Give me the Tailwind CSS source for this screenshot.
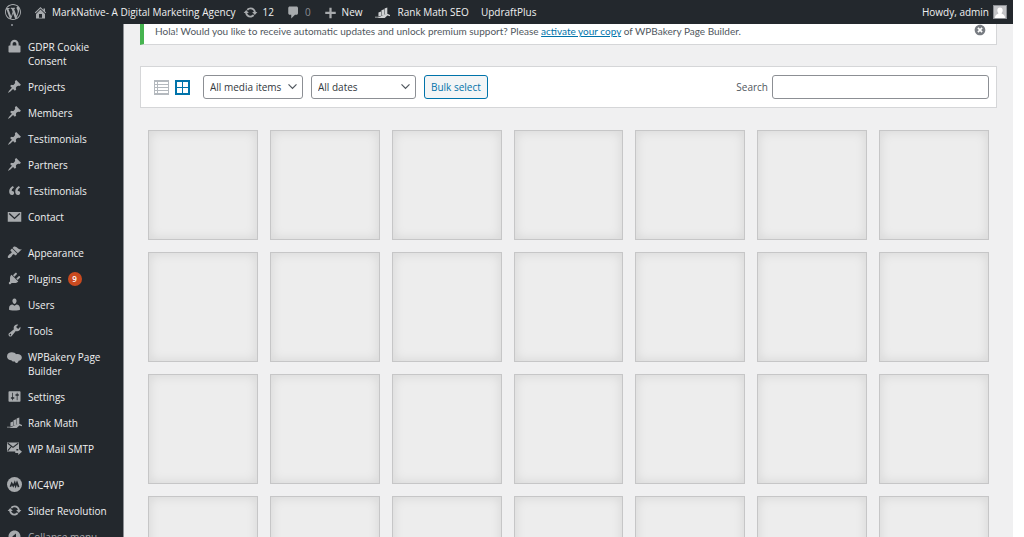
<!DOCTYPE html>
<html lang="en">
<head>
  <meta charset="UTF-8" />
  <meta name="viewport" content="width=device-width, initial-scale=1.0"/>
  <title>Media Library - MarkNative</title>
  <script src="https://cdn.jsdelivr.net/npm/@tailwindcss/browser@4"></script>
</head>
<body class="flex h-screen flex-col overflow-hidden bg-white pr-[11px] font-['Open_Sans','Noto_Sans',sans-serif] text-[10px] leading-[14px]">

  <!-- icons used more than once -->
  <svg class="hidden">
    <symbol id="i-pin" viewBox="0 0 20 20"><path d="M10.44 3.02l1.82-1.82 6.36 6.35-1.83 1.82c-1.05-.68-2.48-.57-3.41.36l-.75.75c-.92.93-1.04 2.35-.35 3.41l-1.83 1.82-2.41-2.41-2.8 2.79c-.42.42-3.38 2.71-3.8 2.29s1.86-3.39 2.28-3.81l2.79-2.79L4.1 9.36l1.83-1.82c1.05.69 2.48.57 3.4-.36l.75-.75c.93-.92 1.05-2.35.36-3.41z"/></symbol>
    <symbol id="i-update" viewBox="0 0 20 20"><path d="M10.2 3.28c3.53 0 6.43 2.61 6.92 6h2.08l-3.5 4-3.5-4h2.32c-.45-1.97-2.21-3.45-4.32-3.45-1.45 0-2.73.71-3.54 1.78L4.95 5.66C6.23 4.2 8.11 3.28 10.2 3.28zm-.4 13.44c-3.52 0-6.43-2.61-6.92-6H.8l3.5-4c1.17 1.33 2.33 2.67 3.5 4H5.48c.45 1.97 2.21 3.45 4.32 3.45 1.45 0 2.73-.71 3.54-1.78l1.71 1.95c-1.28 1.46-3.15 2.38-5.25 2.38z"/></symbol>
    <symbol id="i-rank" viewBox="0 0 20 20"><path d="M4.600 10l3.400-1.300v5.500l-3.400 1.300zM8.600 7l3.600-1.400v7.400l-3.600 1.600zM12.800 4.600l3.600-1.400v8.600l-3.600 1.400z"/><path d="M0 15.700h3.600l1.400.5 7.500-3.500 4-.9 3.500 1.500v1.700l-3.500-.9-3.600 3.100H4.800l-1.300-.6H0z"/></symbol>
    <symbol id="i-chevron" viewBox="0 0 20 20"><path d="M3.500 5.500L10 12l6.500-6.500L18 7l-8 8-8-8z"/></symbol>
  </svg>

  <header class="flex h-6 shrink-0 items-center bg-[#23282d] pr-[6px] pl-[5px] text-[#f0f0f1]">
    <a href="#" aria-label="About WordPress" class="mr-3">
      <svg class="size-4 fill-[#a7aaad]" viewBox="0 0 20 20"><path d="M20 10c0-5.51-4.49-10-10-10C4.48 0 0 4.49 0 10c0 5.52 4.48 10 10 10 5.51 0 10-4.48 10-10zM7.78 15.37L4.37 6.22c.55-.02 1.17-.08 1.17-.08.5-.06.44-1.13-.06-1.11 0 0-1.45.11-2.37.11-.18 0-.37 0-.58-.01C4.12 2.69 6.87 1.11 10 1.11c2.33 0 4.45.87 6.05 2.34-.68-.11-1.65.39-1.65 1.58 0 .74.45 1.36.9 2.1.35.61.55 1.36.55 2.46 0 1.49-1.4 5-1.4 5l-3.03-8.37c.54-.02.82-.17.82-.17.5-.05.44-1.25-.06-1.22 0 0-1.44.12-2.38.12-.87 0-2.33-.12-2.33-.12-.5-.03-.56 1.2-.06 1.22l.92.08 1.26 3.41zM17.41 10c.24-.64.74-1.87.43-4.25.7 1.29 1.05 2.71 1.05 4.25 0 3.29-1.73 6.24-4.4 7.78.97-2.59 1.94-5.2 2.92-7.78zM6.1 18.09C3.12 16.65 1.11 13.53 1.11 10c0-1.3.23-2.48.72-3.59C3.25 10.3 4.67 14.2 6.1 18.09zm4.03-6.63l2.58 6.98c-.86.29-1.76.45-2.71.45-.79 0-1.57-.11-2.29-.33.81-2.38 1.62-4.74 2.42-7.1z"/></svg>
    </a>
    <a href="#" class="mr-2 flex items-center gap-1">
      <svg class="size-[15px] fill-[#a7aaad]" viewBox="0 0 20 20"><path d="M16 8.5l1.53 1.53-1.06 1.06L10 4.6l-6.47 6.49-1.06-1.06L10 2.5l4 4v-2h2v4zm-6-2.46l6 5.99V18H4v-5.97zM12 17v-5H8v5h4z"/></svg>
      <span>MarkNative- A Digital Marketing Agency</span>
    </a>
    <a href="#" class="mr-3 flex items-center gap-1">
      <svg class="size-[15px] fill-[#a7aaad]"><use href="#i-update"/></svg>
      <span>12</span>
    </a>
    <a href="#" class="mr-3 flex items-center gap-1">
      <svg class="size-[15px] fill-[#a7aaad]" viewBox="0 0 20 20"><path d="M5 2h9c1.1 0 2 .9 2 2v7c0 1.1-.9 2-2 2h-2l-5 5v-5H5c-1.1 0-2-.9-2-2V4c0-1.1.9-2 2-2z"/></svg>
      <span class="text-[#8c8f94]">0</span>
    </a>
    <a href="#" class="mr-3 flex items-center gap-1">
      <svg class="size-[15px] fill-[#a7aaad]" viewBox="0 0 20 20"><path d="M17 9v3h-5.500v5.500h-3V12H3V9h5.500V3.500h3V9z"/></svg>
      <span>New</span>
    </a>
    <a href="#" class="mr-3 flex items-center gap-2">
      <svg class="size-[15px] fill-[#d0d2d4]"><use href="#i-rank"/></svg>
      <span>Rank Math SEO</span>
    </a>
    <a href="#">UpdraftPlus</a>
    <a href="#" class="ml-auto flex items-center gap-1">
      <span>Howdy, admin</span>
      <svg class="size-[14px]" viewBox="0 0 14 14"><path fill="#8c8f94" d="M0 0h14v14H0z"/><path fill="#c3c4c7" d="M1 1h12v12H1z"/><path fill="#fff" d="M7 2.500c1.700 0 2.700 1.200 2.700 2.800 0 1-.4 2-1 2.600v.8c1.700.3 3.300 1.300 3.300 4.300H2c0-3 1.600-4 3.300-4.300v-.8c-.6-.6-1-1.600-1-2.600C4.300 3.700 5.300 2.500 7 2.500z"/></svg>
    </a>
  </header>

  <div class="flex min-h-0 flex-1">

    <aside class="w-[124px] shrink-0 overflow-hidden border-r border-[#8c8f94] bg-[#23282d] text-[#f0f0f1]">
      <div class="flex h-[10px] pl-[11px]"><span class="size-[2px] bg-[#787c82]"></span></div>
      <nav>
        <ul>
          <li><a href="#" class="flex gap-[6px] py-[6px] pl-[7px]">
            <svg class="-my-px size-[15px] shrink-0 fill-[#a7aaad]" viewBox="0 0 20 20"><path d="M15.500 8.500h1.500c.55 0 1 .45 1 1V17c0 .55-.45 1-1 1H3c-.55 0-1-.45-1-1V9.500c0-.55.45-1 1-1h1.500V6.500C4.500 3.500 7 1 10 1s5.500 2.500 5.500 5.500zm-3 0v-2c0-1.400-1.100-2.500-2.500-2.500S7.500 5.100 7.500 6.500v2z"/></svg>
            <span>GDPR Cookie<br>Consent</span></a></li>
          <li><a href="#" class="flex gap-[6px] py-[6px] pl-[7px]"><svg class="-my-px size-[15px] shrink-0 fill-[#a7aaad]"><use href="#i-pin"/></svg><span>Projects</span></a></li>
          <li><a href="#" class="flex gap-[6px] py-[6px] pl-[7px]"><svg class="-my-px size-[15px] shrink-0 fill-[#a7aaad]"><use href="#i-pin"/></svg><span>Members</span></a></li>
          <li><a href="#" class="flex gap-[6px] py-[6px] pl-[7px]"><svg class="-my-px size-[15px] shrink-0 fill-[#a7aaad]"><use href="#i-pin"/></svg><span>Testimonials</span></a></li>
          <li><a href="#" class="flex gap-[6px] py-[6px] pl-[7px]"><svg class="-my-px size-[15px] shrink-0 fill-[#a7aaad]"><use href="#i-pin"/></svg><span>Partners</span></a></li>
          <li><a href="#" class="flex gap-[6px] py-[6px] pl-[7px]">
            <svg class="-my-px size-[15px] shrink-0 fill-[#a7aaad]" viewBox="0 0 20 20"><path d="M9.490 13.220c0-.74-.2-1.380-.61-1.900-.62-.78-1.830-.88-2.530-.72-.29-1.650 1.110-3.750 2.920-4.650L7.880 4c-2.730 1.300-5.420 4.280-4.960 8.050C3.210 14.430 4.590 16 6.540 16c.85 0 1.560-.25 2.120-.75s.83-1.180.83-2.030zm8.050 0c0-.74-.2-1.380-.61-1.900-.63-.78-1.830-.88-2.530-.72-.29-1.650 1.110-3.750 2.920-4.650L15.930 4c-2.730 1.300-5.410 4.280-4.950 8.050.29 2.380 1.660 3.950 3.610 3.950.85 0 1.560-.25 2.120-.75s.83-1.180.83-2.030z"/></svg>
            <span>Testimonials</span></a></li>
          <li><a href="#" class="flex gap-[6px] py-[6px] pl-[7px]">
            <svg class="-my-px size-[15px] shrink-0" viewBox="0 0 20 20"><rect x="1" y="4" width="18" height="13" fill="#a7aaad"/><path d="M3 6l7 6.500L17 6" fill="none" stroke="#23282d" stroke-width="1.800"/></svg>
            <span>Contact</span></a></li>
        </ul>
        <ul class="mt-[10px]">
          <li><a href="#" class="flex gap-[6px] py-[6px] pl-[7px]">
            <svg class="-my-px size-[15px] shrink-0 fill-[#a7aaad]" viewBox="0 0 20 20"><path d="M14.480 11.060L7.410 3.990l1.500-1.500c.5-.56 2.300-.47 3.510.32 1.210.8 1.430 1.280 2.910 2.100 1.180.64 2.450 1.260 4.450.85zm-.71.71L6.700 4.700 4.930 6.470c-.39.39-.39 1.020 0 1.410l1.060 1.060c.39.39.39 1.030 0 1.420-.6.6-1.430 1.110-2.210 1.690-.35.26-.7.53-1.010.84C1.430 14.230.4 16.080 1.400 17.070c.99 1 2.840-.03 4.180-1.360.31-.31.58-.66.85-1.020.57-.78 1.080-1.610 1.690-2.210.39-.39 1.020-.39 1.410 0l1.060 1.060c.39.39 1.020.39 1.410 0z"/></svg>
            <span>Appearance</span></a></li>
          <li><a href="#" class="flex gap-[6px] py-[6px] pl-[7px]">
            <svg class="-my-px size-[15px] shrink-0 fill-[#a7aaad]" viewBox="0 0 20 20"><path d="M13.110 4.360L9.870 7.600 8 5.730l3.240-3.240c.35-.34 1.050-.2 1.560.32.52.51.66 1.210.31 1.550zm-8 1.770l.91-1.120 9.010 9.010-1.190.84c-.71.71-2.630 1.160-3.820 1.160H6.140L4.900 17.260c-.59.59-1.540.59-2.120 0-.59-.58-.59-1.530 0-2.120l1.240-1.240v-3.880c0-1.130.4-3.190 1.090-3.890zm7.260 3.970l3.240-3.240c.34-.35 1.040-.21 1.550.31.52.51.66 1.210.31 1.550l-3.240 3.250z"/></svg>
            <span>Plugins</span>
            <span class="size-[14px] rounded-full bg-[#ca4a1f] text-center text-[8px] font-semibold text-white">9</span></a></li>
          <li><a href="#" class="flex gap-[6px] py-[6px] pl-[7px]">
            <svg class="-my-px size-[15px] shrink-0 fill-[#a7aaad]" viewBox="0 0 20 20"><path d="M10 9.250c-2.270 0-2.730-3.440-2.730-3.440C7 4.020 7.820 2 9.970 2c2.160 0 2.980 2.020 2.710 3.810 0 0-.41 3.440-2.680 3.440zm0 2.570L12.720 10c2.390 0 4.520 2.330 4.520 4.530v2.490s-3.650 1.130-7.240 1.130c-3.650 0-7.240-1.130-7.240-1.130v-2.490c0-2.250 1.940-4.480 4.470-4.480z"/></svg>
            <span>Users</span></a></li>
          <li><a href="#" class="flex gap-[6px] py-[6px] pl-[7px]">
            <svg class="-my-px size-[15px] shrink-0 fill-[#a7aaad]" viewBox="0 0 20 20"><path d="M16.680 9.770c-1.340 1.340-3.300 1.670-4.950.99l-5.410 6.520c-.99.99-2.590.99-3.580 0s-.99-2.590 0-3.570l6.520-5.420c-.68-1.650-.35-3.610.99-4.950 1.280-1.280 3.120-1.620 4.720-1.060l-2.890 2.890 2.820 2.820 2.860-2.870c.53 1.580.18 3.390-1.080 4.650zM3.810 16.210c.4.39 1.040.39 1.430 0 .4-.4.4-1.040 0-1.430-.39-.4-1.030-.4-1.430 0-.39.39-.39 1.030 0 1.430z"/></svg>
            <span>Tools</span></a></li>
          <li><a href="#" class="flex gap-[6px] py-[6px] pl-[7px]">
            <svg class="size-[15px] shrink-0 fill-[#a7aaad]" viewBox="0 0 20 20"><path d="M6.500 3C9 3 11 4 12 5.500c4-.8 7.800 1 7.800 4.500 0 2.600-1.800 4.200-4.300 4.400-.3 1.600-1.300 2.600-2.500 2.800-1.400.1-2.300-.9-2.500-2-2 .5-3.800 0-4.500-1.700C2.700 13.500 0 11.500 0 8.500 0 5 3 3 6.500 3z"/></svg>
            <span>WPBakery Page<br>Builder</span></a></li>
          <li><a href="#" class="flex gap-[6px] py-[6px] pl-[7px]">
            <svg class="-my-px size-[15px] shrink-0 fill-[#a7aaad]" viewBox="0 0 20 20"><path d="M18 16V4c0-.55-.45-1-1-1H3c-.55 0-1 .45-1 1v12c0 .55.45 1 1 1h14c.55 0 1-.45 1-1zM8 11h1c.55 0 1 .45 1 1s-.45 1-1 1H8v1.500c0 .28-.22.5-.5.5s-.5-.22-.5-.5V13H6c-.55 0-1-.45-1-1s.45-1 1-1h1V5.500c0-.28.22-.5.5-.5s.5.22.5.5V11zm5-2h-1c-.55 0-1-.45-1-1s.45-1 1-1h1V5.500c0-.28.22-.5.5-.5s.5.22.5.5V7h1c.55 0 1 .45 1 1s-.45 1-1 1h-1v5.500c0 .28-.22.5-.5.5s-.5-.22-.5-.5V9z"/></svg>
            <span>Settings</span></a></li>
          <li><a href="#" class="flex gap-[6px] py-[6px] pl-[7px]"><svg class="-my-px size-[15px] shrink-0 fill-[#a7aaad]"><use href="#i-rank"/></svg><span>Rank Math</span></a></li>
          <li><a href="#" class="flex gap-[6px] py-[6px] pl-[7px]">
            <svg class="-my-px size-[15px] shrink-0" viewBox="0 0 20 20"><path fill="#a7aaad" d="M0 2h16v8.500h-3.500V14H0z"/><path d="M1 3l7 5.500L15 3M1 13l5-6" fill="none" stroke="#23282d" stroke-width="1.500"/><path fill="#a7aaad" d="M11 12.500h4V10l5 4.200-5 4.300V16h-4z"/></svg>
            <span>WP Mail SMTP</span></a></li>
        </ul>
        <ul class="mt-[10px]">
          <li><a href="#" class="flex gap-[6px] py-[6px] pl-[7px]">
            <svg class="-my-px size-[15px] shrink-0" viewBox="0 0 20 20"><circle cx="10" cy="10" r="10" fill="#a7aaad"/><path d="M4.500 13l1.800-4.500 2 3.500 2-4.500 1.200 4.500 1.800-4.500 2.200 6" fill="none" stroke="#23282d" stroke-width="2.200"/></svg>
            <span>MC4WP</span></a></li>
          <li><a href="#" class="flex gap-[6px] py-[6px] pl-[7px]"><svg class="-my-px size-[15px] shrink-0 fill-[#a7aaad]"><use href="#i-update"/></svg><span>Slider Revolution</span></a></li>
          <li><button type="button" class="flex gap-[6px] py-[6px] pl-[7px] text-[#a7aaad]">
            <svg class="-my-px size-[15px] shrink-0 fill-[#a7aaad]" viewBox="0 0 20 20"><path d="M10 2c4.420 0 8 3.580 8 8s-3.580 8-8 8-8-3.580-8-8 3.580-8 8-8zm2 12V6l-5 4z"/></svg>
            <span>Collapse menu</span></button></li>
        </ul>
      </nav>
    </aside>

    <main class="min-w-0 flex-1 overflow-hidden bg-[#f0f0f1] px-4 text-[#50575e]">
      <div class="flex justify-between border-r border-b border-l-4 border-[#d5d6d8] border-l-[#46b450] bg-white pr-[10px] pb-[6px] pl-[11px]">
        <p class="font-[Lato,'Open_Sans',sans-serif]">Hola! Would you like to receive automatic updates and unlock premium support? Please <a href="#" class="text-[#0073aa] underline">activate your copy</a> of WPBakery Page Builder.</p>
        <button type="button" aria-label="Dismiss this notice" class="h-3">
          <svg class="size-[12px] fill-[#787c82]" viewBox="1 1 18 18"><path d="M10 2c4.420 0 8 3.580 8 8s-3.580 8-8 8-8-3.580-8-8 3.580-8 8-8zm4 10.300L11.700 10 14 7.700 12.300 6 10 8.300 7.700 6 6 7.700 8.300 10 6 12.300 7.700 14 10 11.700l2.300 2.300z"/></svg>
        </button>
      </div>

      <div class="mt-[21px] flex items-center border border-[#d5d6d8] bg-white py-2 pr-[7px] pl-[13px]">
        <div class="mr-[13px] flex gap-[6px]">
          <a href="#" aria-label="List view"><svg class="size-[15px]" viewBox="0 0 15 15"><path fill="#b4b9be" d="M0 0h15v15H0z"/><path fill="#fff" d="M1 2h2v2H1zM4 2h10v2H4zM1 5h2v2H1zM4 5h10v2H4zM1 8h2v2H1zM4 8h10v2H4zM1 11h2v2H1zM4 11h10v2H4z"/></svg></a>
          <a href="#" aria-label="Grid view"><svg class="size-[15px]" viewBox="0 0 15 15"><path fill="#0073aa" d="M0 0h15v15H0z"/><path fill="#fff" d="M2 2h5v5H2zM8 2h5v5H8zM2 8h5v5H2zM8 8h5v5H8z"/></svg></a>
        </div>
        <div class="relative mr-2 w-[100px]">
          <select aria-label="Filter by type" class="h-6 w-full appearance-none rounded-[3px] border border-[#8c8f94] bg-white pl-[6px] text-[#32373c]">
            <option>All media items</option>
            <option>Images</option>
          </select>
          <svg class="pointer-events-none absolute top-[6px] right-[5px] size-[11px] fill-[#50575e]"><use href="#i-chevron"/></svg>
        </div>
        <div class="relative mr-2 w-[105px]">
          <select aria-label="Filter by date" class="h-6 w-full appearance-none rounded-[3px] border border-[#8c8f94] bg-white pl-[6px] text-[#32373c]">
            <option>All dates</option>
          </select>
          <svg class="pointer-events-none absolute top-[6px] right-[5px] size-[11px] fill-[#50575e]"><use href="#i-chevron"/></svg>
        </div>
        <button type="button" class="h-6 rounded-[3px] border border-[#0073aa] bg-[#f3f5f6] px-[6px] text-[#0073aa]">Bulk select</button>
        <label for="media-search" class="ml-auto mr-1">Search</label>
        <input id="media-search" type="search" class="h-6 w-[217px] rounded-[3px] border border-[#8c8f94] bg-white px-2">
      </div>

      <ul id="attachments" class="mt-[22px] grid grid-cols-7 gap-3 px-2"></ul>
    </main>
  </div>

  <script>
    const attachments = document.getElementById("attachments");

    for (let i = 0; i < 28; i++) {
      attachments.insertAdjacentHTML(
        "beforeend",
        `<li class="aspect-square border border-[#c6c6c7] bg-[#ededed] shadow-[inset_0_0_12px_rgba(0,0,0,0.1)]"></li>`
      );
    }
  </script>
</body>
</html>
